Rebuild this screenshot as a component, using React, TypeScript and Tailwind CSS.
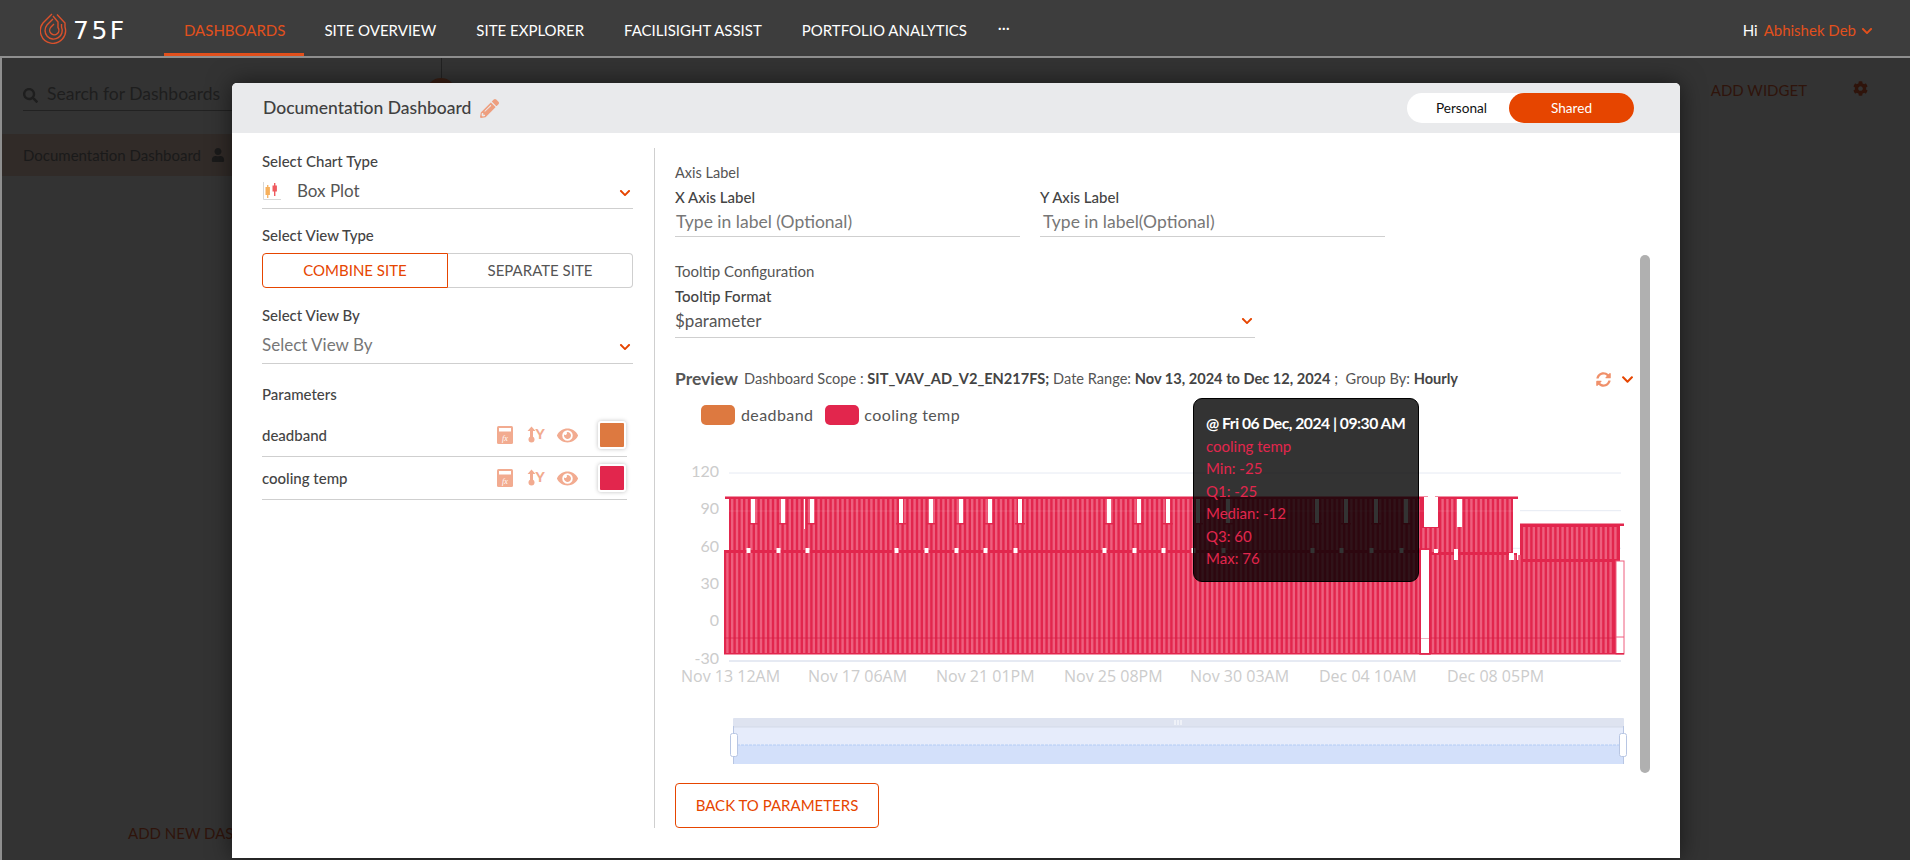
import React from "react";
import { FaChevronDown, FaCog, FaEye, FaPencilAlt, FaSearch, FaSyncAlt, FaUser } from "react-icons/fa";

const navItems = ["SITE OVERVIEW", "SITE EXPLORER", "FACILISIGHT ASSIST", "PORTFOLIO ANALYTICS"];

// white gaps in the upper band of the box plot (page x)
const slits = [753, 783, 812, 901, 931, 961, 990, 1020, 1109, 1139, 1168, 1198, 1228, 1317, 1346, 1376, 1406];
const gridY = [473, 510.7, 548.3, 586, 623.6];
const yLabels = [
  { label: "120", y: 472 },
  { label: "90", y: 509 },
  { label: "60", y: 547 },
  { label: "30", y: 584 },
  { label: "0", y: 621 },
  { label: "-30", y: 659 },
];
const xLabels = [
  { label: "Nov 13 12AM", x: 681 },
  { label: "Nov 17 06AM", x: 808 },
  { label: "Nov 21 01PM", x: 936 },
  { label: "Nov 25 08PM", x: 1064 },
  { label: "Nov 30 03AM", x: 1190 },
  { label: "Dec 04 10AM", x: 1319 },
  { label: "Dec 08 05PM", x: 1447 },
];

const stripes: number[] = [];
for (let x = 725; x < 1622; x += 4.8) stripes.push(x);

const Logo = () => (
  <svg width="28" height="32" viewBox="0 0 28 32" fill="none" stroke="#d9512c" strokeWidth="1.4">
    <path d="M12 2 L3 11 A12.6 12.6 0 1 0 25 15 L25 11 L17 2.5" />
    <path d="M13 7 L7 13 A8.6 8.6 0 1 0 21.5 15 L21.5 12" />
    <path d="M14 12 L11 15 A4.6 4.6 0 1 0 18 15.5 L18 10 L13 4" />
  </svg>
);

const BoxPlotIcon = () => (
  <svg width="20" height="20" viewBox="0 0 20 20">
    <path d="M1.5 1v17.5H19" fill="none" stroke="#d8d8d8" strokeWidth="1" />
    <rect x="5" y="4" width="1.4" height="13" fill="#f5b56a" />
    <rect x="3.5" y="6" width="4.4" height="8" fill="#f7b05c" />
    <rect x="12" y="2" width="1.4" height="13" fill="#ef5a5f" />
    <rect x="10.5" y="4.5" width="4.4" height="6" fill="#ef5a5f" />
  </svg>
);

const FxIcon = () => (
  <svg width="16" height="18" viewBox="0 0 16 18">
    <rect width="16" height="18" rx="1.5" fill="#f2ab90" />
    <rect x="2" y="2" width="12" height="3.5" fill="#fff" />
    <text x="8" y="15" textAnchor="middle" className="fill-white text-[8px] italic font-['Liberation_Serif',serif]">
      fx
    </text>
  </svg>
);

const AxisIcon = () => (
  <svg width="18" height="18" viewBox="0 0 18 18">
    <path d="M4.5 0.5 L8.5 5 H6 V11 H3 V5 H0.5 Z" fill="#f2ab90" />
    <circle cx="4.5" cy="13.5" r="3" fill="#f2ab90" />
    <text x="13" y="13" textAnchor="middle" className="fill-[#f2ab90] text-[14px] font-black font-['Lato',sans-serif]">
      Y
    </text>
  </svg>
);

const ParameterRow = ({ name, color }: { name: string; color: string }) => (
  <div className="flex h-[43px] w-[365px] items-center justify-between border-b border-[#cfcfcf] pr-[1px]">
    <span className="text-[15px] font-medium text-[#444]">{name}</span>
    <div className="flex items-center">
      <FxIcon />
      <span className="ml-[14px]">
        <AxisIcon />
      </span>
      <FaEye className="ml-[12px] text-[#f2ab90]" size={21} />
      <span className={`ml-[20px] h-[28px] w-[28px] rounded-[3px] border-2 border-white shadow-[0_0_4px_rgba(0,0,0,0.25)] ${color}`} />
    </div>
  </div>
);

const Chart = () => (
  <svg width="965" height="335" viewBox="675 440 965 335" className="mt-[13px] block">
    {gridY.map((y) => (
      <line key={y} x1="729" x2="1621" y1={y} y2={y} stroke="#e6eaf3" />
    ))}
    <line x1="729" x2="1621" y1="661" y2="661" stroke="#e6eaf3" strokeWidth="2" />
    {yLabels.map((t) => (
      <text key={t.label} x="719" y={t.y + 5} textAnchor="end" className="fill-[#ccc] text-[16px] font-['Lato',sans-serif]">
        {t.label}
      </text>
    ))}
    {xLabels.map((t) => (
      <text key={t.label} x={t.x} y="682" className="fill-[#ccc] text-[16px] font-['Open_Sans',sans-serif]">
        {t.label}
      </text>
    ))}

    {/* upper and lower boxes */}
    <rect x="729" y="498" width="695" height="54" fill="#e2264d" />
    <rect x="1420" y="527" width="18" height="27" fill="#e2264d" />
    <rect x="1438" y="498" width="75" height="56" fill="#e2264d" />
    <rect x="1520" y="525" width="100" height="36" fill="#e2264d" />
    <rect x="724" y="551" width="697" height="103" fill="#e2264d" />
    <rect x="1429" y="553" width="88" height="101" fill="#e2264d" />
    <rect x="1517" y="560" width="99" height="94" fill="#e2264d" />
    <g fill="#ee5f7e">
      {stripes.map((x) => (
        <g key={x}>
          {x < 1417 && <rect x={x + 1.2} y="553" width="2.4" height="100" />}
          {x < 1420 && x > 729 && <rect x={x + 1.2} y="499" width="2.4" height="51" />}
          {x > 1420 && x < 1438 && <rect x={x + 1.2} y="528" width="2.4" height="24" />}
          {x > 1429 && x < 1612 && <rect x={x + 1.2} y={x < 1517 ? 555 : 562} width="2.4" height={x < 1517 ? 98 : 91} />}
          {x > 1438 && x < 1510 && <rect x={x + 1.2} y="499" width="2.4" height="53" />}
          {x > 1520 && x < 1616 && <rect x={x + 1.2} y="527" width="2.4" height="32" />}
        </g>
      ))}
    </g>
    <rect x="725" y="496.5" width="703" height="2.5" fill="#e2264d" />
    <rect x="1435" y="496.5" width="83" height="2.5" fill="#e2264d" />
    <rect x="1520" y="523.5" width="104" height="2.5" fill="#e2264d" />
    <rect x="724" y="550" width="697" height="2" fill="#e2264d" />
    <line x1="724" x2="1616" y1="638" y2="638" stroke="#d41f44" strokeOpacity="0.7" />
    <line x1="729" x2="1513" y1="511" y2="511" stroke="#fff" strokeOpacity="0.12" />

    {/* gaps */}
    {slits.map((x) => (
      <g key={x}>
        <rect x={x - 2} y="499" width="4" height="24" fill="#fff" />
        <rect x={x - 5} y="523" width="10" height="1.5" fill="#e2264d" />
        <rect x={x - 6.5} y="548" width="4" height="5" fill="#fff" />
      </g>
    ))}
    <rect x="804" y="499" width="1" height="30" fill="#fff" />
    <rect x="1424" y="497" width="14" height="30" fill="#fff" />
    <rect x="1457" y="499" width="5" height="28" fill="#fff" />
    <rect x="1513" y="499" width="7" height="24" fill="#fff" />
    <rect x="1421" y="550" width="8" height="88" fill="#fff" />
    <rect x="1421" y="640" width="8" height="12" fill="#fff" />
    <rect x="1420" y="549" width="10" height="105" fill="none" stroke="#e2264d" strokeWidth="1.5" />
    <rect x="1434" y="549" width="4" height="4" fill="#fff" />
    <rect x="1454" y="549" width="4" height="11" fill="#fff" />
    <rect x="1509" y="553" width="5" height="7" fill="#fff" />
    <rect x="1616" y="561" width="8" height="93" fill="#fff" stroke="#ee5f7e" />
    <line x1="1616" x2="1624" y1="637" y2="637" stroke="#ee5f7e" />
    <rect x="724" y="653" width="900" height="1.5" fill="#e2264d" />

    {/* data zoom */}
    <rect x="733" y="718" width="891" height="9" rx="1" fill="#dee3f0" />
    <rect x="733" y="727" width="891" height="18" fill="#e6ecfb" />
    <rect x="733" y="745" width="891" height="19" fill="#d3e0fa" />
    <line x1="733" x2="1624" y1="745" y2="745" stroke="#b3ccf5" strokeDasharray="3 1" />
    <line x1="733" x2="1624" y1="727" y2="727" stroke="#d3d9e8" />
    <path d="M1175 720v5M1178 720v5M1181 720v5" stroke="#fff" />
    <line x1="733.5" x2="733.5" y1="726" y2="764" stroke="#b8c6e3" />
    <line x1="1623.5" x2="1623.5" y1="726" y2="764" stroke="#b8c6e3" />
    <rect x="730.5" y="733.5" width="7" height="23" rx="2" fill="#fff" stroke="#b8c6e3" />
    <rect x="1619.5" y="733.5" width="7" height="23" rx="2" fill="#fff" stroke="#b8c6e3" />
  </svg>
);

const App = () => {
  return (
    <div className="relative flex h-[860px] w-[1910px] flex-col overflow-hidden bg-[#333] font-['Lato',sans-serif]">
      <header className="flex h-[56px] shrink-0 items-stretch bg-[#3d3d3d] pr-[37px]">
        <div className="flex w-[164px] shrink-0 items-center pb-[1px] pl-[40px]">
          <Logo />
          <span className="ml-[5px] mt-[5px] text-[25px] leading-none tracking-[2.5px] text-white font-['DejaVu_Sans',sans-serif]">75F</span>
        </div>
        <nav className="flex items-stretch text-[15px] text-white">
          <a className="flex items-center border-b-[3px] border-[#e2501c] pl-5 pr-[19px] pt-[8px] text-[#e2501c]">DASHBOARDS</a>
          {navItems.map((item) => (
            <a key={item} className="flex items-center px-5 pt-[5px] pb-0">
              {item}
            </a>
          ))}
          <span className="flex items-start pl-[11px] pt-[13px] text-[15px] font-bold tracking-[0.5px]">...</span>
        </nav>
        <div className="ml-auto flex items-center pt-[5px] text-[15px]">
          <span className="text-white">Hi</span>
          <span className="ml-[6px] text-[#e2501c]">Abhishek Deb</span>
          <FaChevronDown className="ml-[5px] text-[#e2501c]" size={12} />
        </div>
      </header>

      <main className="flex min-h-0 flex-1 border-l-2 border-t-2 border-[#8f8f8f]">
        <aside className="flex w-[230px] shrink-0 flex-col pb-[16px]">
          <div className="ml-[21px] mt-[26px] flex h-[27px] w-[209px] items-start border-b border-[#222] text-[#1e1e1e]">
            <FaSearch size={15} className="mt-[4px]" />
            <span className="ml-[9px] whitespace-nowrap text-[17.5px] leading-[20px]">Search for Dashboards</span>
          </div>
          <div className="mt-[23px] flex h-[42px] items-center bg-[#312b28] pl-[21px] text-[#1a1a1a]">
            <span className="whitespace-nowrap text-[15px]">Documentation Dashboard</span>
            <FaUser size={14} className="ml-[10px] shrink-0" />
          </div>
          <span className="mt-auto whitespace-nowrap pl-[126px] text-[15px] text-[#2f140b]">ADD NEW DASHBOARD</span>
        </aside>
        <div className="flex flex-1 justify-end pr-[42px] pt-[21px] text-[#2f140b]">
          <span className="text-[15px]">ADD WIDGET</span>
          <FaCog size={15} className="ml-[46px] mt-[2px]" />
        </div>
      </main>

      <div className="absolute left-[441px] top-[58px] h-[25px] w-px bg-[#222]" />
      <div className="absolute left-[426px] top-[78px] h-[30px] w-[30px] rounded-full bg-[#3a1f14]" />

      {/* modal */}
      <section className="absolute left-[232px] top-[83px] flex h-[775px] w-[1448px] flex-col rounded-t-[5px] bg-white text-[#444] shadow-[0_0_24px_rgba(0,0,0,0.55)]">
        <div className="flex h-[50px] shrink-0 items-center justify-between rounded-t-[5px] bg-[#e9eaec] pl-[31px] pr-[46px]">
          <div className="flex items-center">
            <h1 className="text-[17.5px] font-medium text-[#404040]">Documentation Dashboard</h1>
            <FaPencilAlt size={19} className="ml-[9px] text-[#ee9f7f]" />
          </div>
          <div className="flex h-[30px] w-[227px] rounded-full bg-white text-[13.6px]">
            <span className="flex flex-1 items-center justify-center pl-[7px] text-[#111]">Personal</span>
            <span className="flex w-[125px] items-center justify-center rounded-full bg-[#e64500] text-white">Shared</span>
          </div>
        </div>

        <div className="flex min-h-0 flex-1">
          {/* left panel */}
          <div className="mb-[30px] mt-[15px] flex w-[423px] shrink-0 flex-col border-r border-[#cfcfcf] pl-[30px] pr-[21px]">
            <label className="mt-[5px] text-[15px] font-medium leading-[17px] text-[#444]">Select Chart Type</label>
            <div className="mt-[7px] flex h-[32px] items-center justify-between border-b border-[#cfcfcf] pb-[4px] pr-[2px]">
              <span className="flex items-center text-[17px] text-[#555]">
                <BoxPlotIcon />
                <span className="ml-[15px]">Box Plot</span>
              </span>
              <FaChevronDown size={12} className="mt-[5px] text-[#e64500]" />
            </div>
            <label className="mt-[18px] text-[15px] font-medium leading-[17px]">Select View Type</label>
            <div className="mt-[9px] flex h-[35px] text-[15px]">
              <span className="flex w-[186px] items-center justify-center rounded-l-[4px] border border-[#e64500] text-[#e64500]">COMBINE SITE</span>
              <span className="flex flex-1 items-center justify-center rounded-r-[4px] border border-l-0 border-[#cfcfcf] text-[#555]">SEPARATE SITE</span>
            </div>
            <label className="mt-[19px] text-[15px] font-medium leading-[17px]">Select View By</label>
            <div className="mt-[6px] flex h-[34px] items-center justify-between border-b border-[#cfcfcf] pb-[4px] pr-[2px]">
              <span className="text-[17px] text-[#777]">Select View By</span>
              <FaChevronDown size={12} className="mt-[5px] text-[#e64500]" />
            </div>
            <label className="mt-[22px] text-[15px] font-medium leading-[17px]">Parameters</label>
            <div className="mt-[11px] flex flex-col">
              <ParameterRow name="deadband" color="bg-[#dd7940]" />
              <ParameterRow name="cooling temp" color="bg-[#e2264d]" />
            </div>
          </div>

          {/* right panel */}
          <div className="relative flex min-w-0 flex-1 flex-col pl-[20px] pt-[31px]">
            <p className="text-[14.5px] leading-[17px] text-[#555]">Axis Label</p>
            <div className="mt-[8px] flex gap-[20px]">
              <div className="w-[345px]">
                <label className="block text-[15px] font-medium leading-[17px]">X Axis Label</label>
                <div className="mt-[3px] h-[28px] border-b border-[#cfcfcf] pl-[1px] text-[17.5px] leading-[25px] text-[#777]">Type in label (Optional)</div>
              </div>
              <div className="w-[345px]">
                <label className="block text-[15px] font-medium leading-[17px]">Y Axis Label</label>
                <div className="mt-[3px] h-[28px] border-b border-[#cfcfcf] pl-[3px] text-[17.5px] leading-[25px] text-[#777]">Type in label(Optional)</div>
              </div>
            </div>
            <p className="mt-[26px] text-[15px] leading-[17px] text-[#555]">Tooltip Configuration</p>
            <label className="mt-[8px] text-[15px] font-medium leading-[17px]">Tooltip Format</label>
            <div className="mt-[2px] flex h-[31px] w-[580px] items-center justify-between border-b border-[#cfcfcf] pb-[3px] pr-[2px]">
              <span className="text-[17px] text-[#555]">$parameter</span>
              <FaChevronDown size={12} className="text-[#e64500]" />
            </div>
            <div className="mt-[30px] flex h-[22px] w-[959px] items-center">
              <span className="text-[17.5px] font-bold text-[#555]">Preview</span>
              <p className="ml-[6px] whitespace-pre text-[14.6px] text-[#555]">
                Dashboard Scope : <b className="font-bold text-[#444]">SIT_VAV_AD_V2_EN217FS;</b> Date Range: <b className="font-bold text-[#444]">Nov 13, 2024 to Dec 12, 2024</b> ;  Group By: <b className="font-bold text-[#444]">Hourly</b>
              </p>
              <FaSyncAlt size={15} className="ml-auto text-[#f0906a]" />
              <FaChevronDown size={13} className="ml-[10px] text-[#e64500]" />
            </div>
            <div className="mt-[12px] flex h-[25px] items-center pl-[26px] text-[16px] tracking-[0.4px] text-[#555]">
              <span className="h-[20px] w-[34px] rounded-[5px] bg-[#dd7940]" />
              <span className="ml-[6px]">deadband</span>
              <span className="ml-[12px] h-[20px] w-[34px] rounded-[5px] bg-[#e2264d]" />
              <span className="ml-[5px]">cooling temp</span>
            </div>
            <Chart />
            <button className="mt-[8px] h-[45px] w-[204px] rounded-[4px] border border-[#e64500] text-[15px] text-[#e64500]">BACK TO PARAMETERS</button>

            {/* tooltip sits over the chart */}
            <div className="absolute left-[538px] top-[265px] h-[184px] w-[226px] rounded-[9px] border border-black bg-[rgba(0,0,0,0.8)] px-[12px] pt-[13px] text-[15px] leading-[22.5px] text-[#e2264d]">
              <p className="whitespace-nowrap text-[15.7px] font-bold tracking-[-0.5px] text-white">@ Fri 06 Dec, 2024 | 09:30 AM</p>
              <p>cooling temp</p>
              <p>Min: -25</p>
              <p>Q1: -25</p>
              <p>Median: -12</p>
              <p>Q3: 60</p>
              <p>Max: 76</p>
            </div>
            <div className="absolute left-[985px] top-[122px] h-[518px] w-[10px] rounded-full bg-[#b0b0b0]" />
          </div>
        </div>
      </section>
    </div>
  );
};

export default App;
